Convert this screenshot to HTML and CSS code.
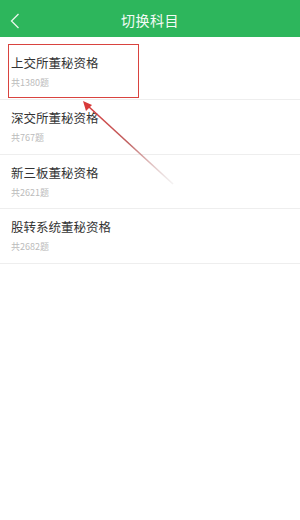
FILE: index.html
```html
<!DOCTYPE html>
<html lang="zh">
<head>
<meta charset="utf-8">
<link rel="stylesheet" href="styles.css">
</head>
<body>
<div class="app">
  <header class="bar">
    <svg class="back" width="12" height="18" viewBox="0 0 12 18"><path d="M9.5 2 L2.5 9 L9.5 16" fill="none" stroke="#e8f7ec" stroke-width="1.3"/></svg>
    <div class="title">切换科目</div>
  </header>
  <ul class="list">
    <li class="row"><div class="name">上交所董秘资格</div><div class="count">共1380题</div></li>
    <li class="row"><div class="name">深交所董秘资格</div><div class="count">共767题</div></li>
    <li class="row"><div class="name">新三板董秘资格</div><div class="count">共2621题</div></li>
    <li class="row"><div class="name">股转系统董秘资格</div><div class="count">共2682题</div></li>
  </ul>
  <div class="box"></div>
  <svg class="arrow" width="300" height="520" viewBox="0 0 300 520">
    <defs>
      <linearGradient id="g" x1="173" y1="184" x2="84" y2="102" gradientUnits="userSpaceOnUse">
        <stop offset="0" stop-color="#d9d2d2" stop-opacity="0.3"/>
        <stop offset="0.5" stop-color="#c06060"/>
        <stop offset="1" stop-color="#d83a3a"/>
      </linearGradient>
    </defs>
    <line x1="173" y1="184" x2="88" y2="106" stroke="url(#g)" stroke-width="1.6"/>
    <path d="M83 101 L86 111 L89 108 L92 105 Z" fill="#d83a3a"/>
  </svg>
</div>
</body>
</html>
```
FILE: styles.css
```css
html, body { margin: 0; padding: 0; background: #fff; }
body { font-family: "Noto Sans CJK SC", "Liberation Sans", sans-serif; }
.app { position: relative; width: 300px; height: 520px; overflow: hidden; }
.bar {
  height: 37px; background: #2db65c; display: flex; align-items: center;
  justify-content: center; position: relative;
}
.back { position: absolute; left: 9px; top: 12px; }
.title { color: #f4fbf6; font-size: 14px; letter-spacing: 0.5px; margin-top: 2px; }
.list { list-style: none; margin: 0; padding: 8px 0 0 0; }
.row {
  height: 54.5px; border-bottom: 1px solid #eeeeee; padding: 9px 0 0 11px;
  display: flex; flex-direction: column; gap: 5px;
  box-sizing: border-box;
}
.row:first-child { height: 55px; }
.name { font-size: 12.5px; color: #333; line-height: 17px; }
.count { font-size: 9px; color: #bbbbbb; line-height: 13px; }
.box {
  position: absolute; left: 8px; top: 44px; width: 131px; height: 54px;
  border: 1.5px solid #d9433f; box-sizing: border-box;
}
.arrow { position: absolute; left: 0; top: 0; pointer-events: none; }
```
